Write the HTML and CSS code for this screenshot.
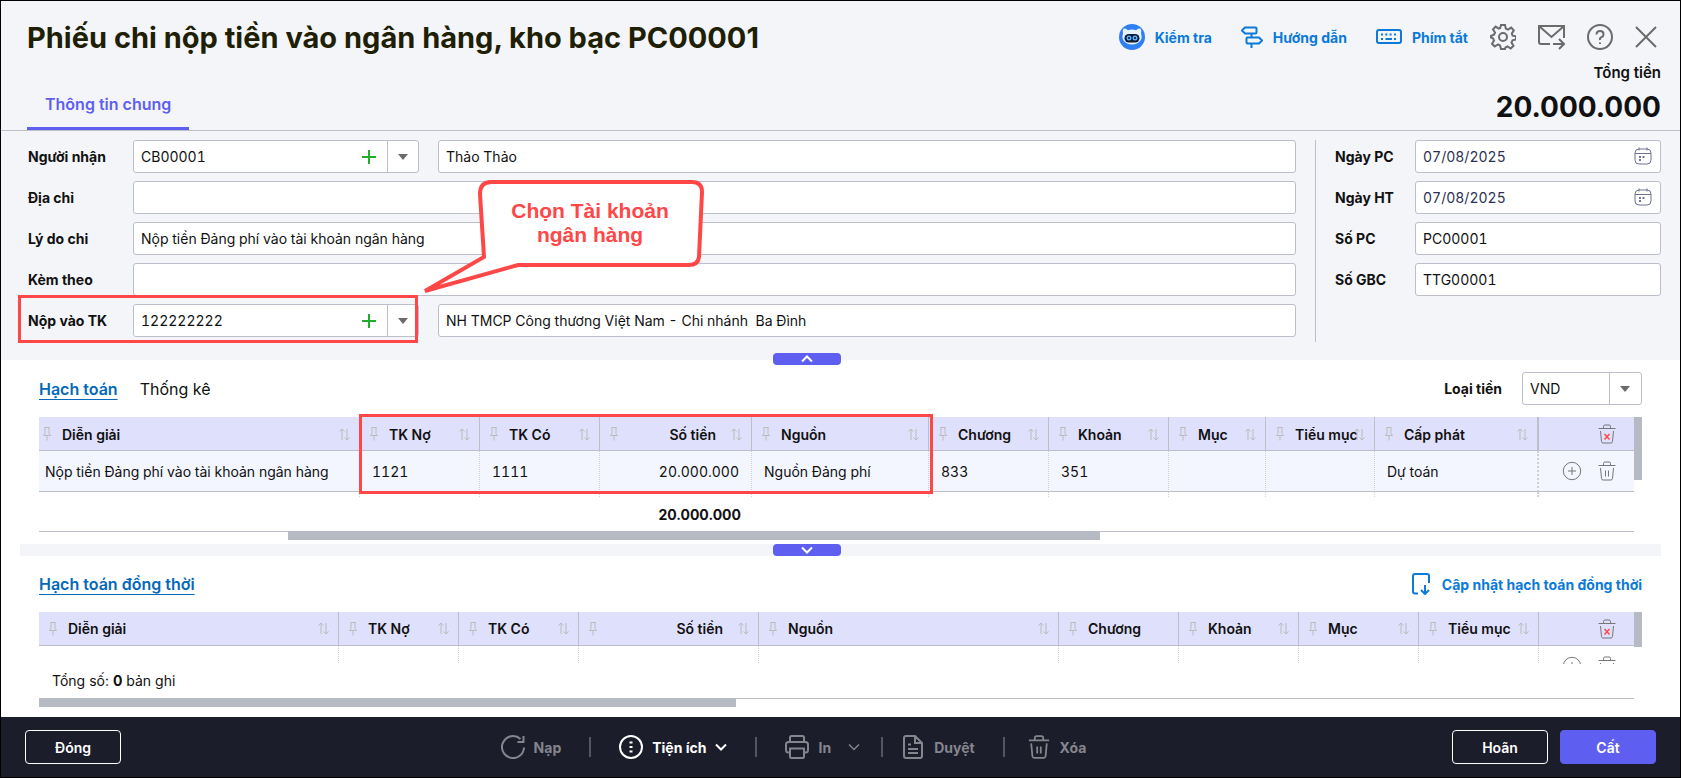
FILE: index.html
```html
<!DOCTYPE html>
<html lang="vi">

<head>
  <meta charset="UTF-8">
  <meta name="viewport" content="width=device-width, initial-scale=1.0">
  <title>Phiếu chi nộp tiền vào ngân hàng, kho bạc PC00001</title>
  <link rel="stylesheet" href="styles.css">
</head>

<body>
  <!-- icons used more than once -->
  <svg class="sprite" aria-hidden="true">
    <symbol id="i-pin" viewBox="0 0 8 14"><path d="M1.5 .5h5M2 .5v6L.5 8.500h7L6 6.500v-6M4 8.500v5" /></symbol>
    <symbol id="i-sort" viewBox="0 0 11 13"><path d="M3 12V1M.5 3.500 3 1l2.500 2.500M8 1v11M5.500 9.500 8 12l2.500-2.500" /></symbol>
    <symbol id="i-trash" viewBox="0 0 18 20"><path d="M.5 4.500h17M5.500 4.500V2.500Q5.500 1 7 1h4q1.500 0 1.500 1.500v2M2.500 7l1 10.500Q3.700 19 5 19h8q1.300 0 1.500-1.500l1-10.500M7.500 9.500v6M10.500 9.500v6" /></symbol>
    <symbol id="i-trash-x" viewBox="0 0 18 20"><path d="M.5 4.500h17M5.500 4.500V2.500Q5.500 1 7 1h4q1.500 0 1.500 1.500v2M2.500 7l1 10.500Q3.700 19 5 19h8q1.300 0 1.500-1.500l1-10.500" /><path class="cross" d="M6.500 10l5 5.500M11.500 10l-5 5.500" /></symbol>
    <symbol id="i-plus-circle" viewBox="0 0 20 20"><circle cx="10" cy="10" r="8.700" /><path d="M10 6v8M6 10h8" /></symbol>
    <symbol id="i-calendar" viewBox="0 0 18 18"><rect x="1" y="2" width="16" height="15" rx="4" /><path d="M1 6.500h16M5 .5v3M13 .5v3" /><path class="thick" d="M5 10h2M8.500 10h2M5 13h2" /></symbol>
    <symbol id="i-down" viewBox="0 0 12 8"><path d="M1 1.500l5 5 5-5" /></symbol>
  </svg>

  <div class="window">
    <header class="header">
      <div class="header-left">
        <h1>Phiếu chi nộp tiền vào ngân hàng, kho bạc PC00001</h1>
        <a class="main-tab" href="#">Thông tin chung</a>
      </div>
      <div class="header-right">
        <div class="tools">
          <a class="tool-link" href="#">
            <svg width="26" height="26" viewBox="0 0 26 26">
              <circle cx="13" cy="13" r="13" fill="#2e80f2" stroke="none" />
              <path d="M4 9.500Q3 4.500 5.500 4.500q2 0 3.500 1.700 4-1.600 8 0 1.500-1.700 3.500-1.700 2.500 0 1.500 5 1.500 4-.5 7-3 4-8.500 4t-8.500-4q-2-3-.5-7z" fill="#e6f2fd" stroke="none" />
              <rect x="5.500" y="10" width="15" height="8.500" rx="4.200" fill="#0d1c36" stroke="none" />
              <circle cx="10" cy="14" r="1.800" stroke="#5cb4ff" stroke-width="1.400" />
              <circle cx="16" cy="14" r="1.800" stroke="#5cb4ff" stroke-width="1.400" />
            </svg>
            Kiểm tra</a>
          <a class="tool-link" href="#">
            <svg class="line-blue" width="22" height="22" viewBox="0 0 22 22">
              <path d="M4 1.500h10.500q1 0 1 1v4q0 1-1 1H4L1 4.500zM18 11.500H6.500q-1 0-1 1v4q0 1 1 1H18l3-3zM10.500 7.500v4M10.500 17.500V22" />
            </svg>
            Hướng dẫn</a>
          <a class="tool-link" href="#">
            <svg class="line-blue" width="26" height="16" viewBox="0 0 26 16">
              <rect x="1" y="1" width="24" height="13" rx="2" />
              <path class="keys" d="M5 5.500h2M9.300 5.500h2M13.600 5.500h2M18 5.500h2M5 10h2M9.500 10h6.500M18 10h2" />
            </svg>
            Phím tắt</a>
          <button class="icon-btn" type="button" aria-label="Thiết lập">
            <svg width="26" height="26" viewBox="0 0 26 26">
              <path d="M11 1h4l.8 3.600 2.200 1 3.200-2 2.600 2.800-2 3.200.8 2 3.400.8v3l-3.500 1-1 2.200 2 3.200-2.800 2.700-3.200-2-2 .9L15 25h-4l-1-3.600-2-.9-3.300 2-2.700-2.700 2-3.200-.9-2.200L1 13.500v-1.500l3.200-1.500.8-1.900-2-3.300L5.600 2.600l3.200 2 1.400-.6z" />
              <circle cx="13" cy="13" r="4" />
            </svg>
          </button>
          <button class="icon-btn" type="button" aria-label="Gửi thư">
            <svg width="27" height="26" viewBox="0 0 27 26">
              <path d="M12 20H3q-2 0-2-2V2h25v12M1.500 2.500l12 10.500 12-10.500M15 20h10.500M21 15l5 5-5 5" />
            </svg>
          </button>
          <button class="icon-btn" type="button" aria-label="Trợ giúp">
            <svg width="26" height="26" viewBox="0 0 26 26">
              <circle cx="13" cy="13" r="12" />
              <path d="M9.500 10.500Q9.500 7 13 7t3.500 3.200q0 2-2 3T13 16M13 18.500v1.500" />
            </svg>
          </button>
          <button class="icon-btn" type="button" aria-label="Đóng cửa sổ">
            <svg width="22" height="22" viewBox="0 0 22 22"><path d="M1 1l20 20M21 1L1 21" /></svg>
          </button>
        </div>
        <div class="total-label">Tổng tiền</div>
        <div class="total-value">20.000.000</div>
      </div>
    </header>

    <section class="general">
      <div class="fields">
        <label for="receiver">Người nhận</label>
        <div class="pair">
          <div class="combo">
            <input type="text" id="receiver" value="CB00001">
            <button class="add" type="button" aria-label="Thêm"></button>
            <button class="drop" type="button" aria-label="Chọn"></button>
          </div>
          <input type="text" aria-label="Tên người nhận" value="Thảo Thảo">
        </div>

        <label for="address">Địa chỉ</label>
        <input type="text" id="address">

        <label for="reason">Lý do chi</label>
        <input type="text" id="reason" value="Nộp tiền Đảng phí vào tài khoản ngân hàng">

        <label for="attach">Kèm theo</label>
        <input type="text" id="attach">

        <label for="account">Nộp vào TK</label>
        <div class="pair">
          <div class="combo marked">
            <input type="text" id="account" value="122222222">
            <button class="add" type="button" aria-label="Thêm"></button>
            <button class="drop" type="button" aria-label="Chọn"></button>
          </div>
          <input type="text" aria-label="Tên ngân hàng" value="NH TMCP Công thương Việt Nam - Chi nhánh  Ba Đình">
        </div>
      </div>

      <div class="side">
        <label for="date-pc">Ngày PC</label>
        <div class="date">
          <input type="text" id="date-pc" value="07/08/2025">
          <svg width="18" height="18"><use href="#i-calendar" /></svg>
        </div>
        <label for="date-ht">Ngày HT</label>
        <div class="date">
          <input type="text" id="date-ht" value="07/08/2025">
          <svg width="18" height="18"><use href="#i-calendar" /></svg>
        </div>
        <label for="no-pc">Số PC</label>
        <input type="text" id="no-pc" value="PC00001">
        <label for="no-gbc">Số GBC</label>
        <input type="text" id="no-gbc" value="TTG00001">
      </div>

      <div class="callout">
        <svg width="284" height="116" viewBox="0 0 284 116">
          <path d="M69 2H270Q280 2 280 12L277 77Q276 85 267 85H96L3 111 62 77 58 14Q58 2 69 2z" />
        </svg>
        <p>Chọn Tài khoản<br>ngân hàng</p>
      </div>

      <button class="collapse collapse-up" type="button" aria-label="Thu gọn">
        <svg width="12" height="8"><use href="#i-down" /></svg>
      </button>
    </section>

    <section class="detail">
      <div class="detail-head detail-head-main">
        <nav class="tabs">
          <a class="active" href="#">Hạch toán</a>
          <a href="#">Thống kê</a>
        </nav>
        <label for="currency">Loại tiền</label>
        <div class="currency">
          <select id="currency">
            <option>VND</option>
          </select>
        </div>
      </div>

      <div class="grid">
        <div class="grid-view view-main">
          <table class="scrolled">
            <colgroup>
              <col>
              <col class="w120">
              <col class="w120">
              <col class="w152">
              <col class="w177">
              <col class="w120">
              <col class="w120">
              <col class="w97">
              <col class="w109">
              <col class="w164">
              <col class="w95">
            </colgroup>
            <thead>
              <tr>
                <th><div><svg class="pin"><use href="#i-pin" /></svg><span>Diễn giải</span><svg class="sort"><use href="#i-sort" /></svg></div></th>
                <th><div><svg class="pin"><use href="#i-pin" /></svg><span>TK Nợ</span><svg class="sort"><use href="#i-sort" /></svg></div></th>
                <th><div><svg class="pin"><use href="#i-pin" /></svg><span>TK Có</span><svg class="sort"><use href="#i-sort" /></svg></div></th>
                <th class="num"><div><svg class="pin"><use href="#i-pin" /></svg><span>Số tiền</span><svg class="sort"><use href="#i-sort" /></svg></div></th>
                <th><div><svg class="pin"><use href="#i-pin" /></svg><span>Nguồn</span><svg class="sort"><use href="#i-sort" /></svg></div></th>
                <th><div><svg class="pin"><use href="#i-pin" /></svg><span>Chương</span><svg class="sort"><use href="#i-sort" /></svg></div></th>
                <th><div><svg class="pin"><use href="#i-pin" /></svg><span>Khoản</span><svg class="sort"><use href="#i-sort" /></svg></div></th>
                <th><div><svg class="pin"><use href="#i-pin" /></svg><span>Mục</span><svg class="sort"><use href="#i-sort" /></svg></div></th>
                <th><div><svg class="pin"><use href="#i-pin" /></svg><span>Tiểu mục</span><svg class="sort"><use href="#i-sort" /></svg></div></th>
                <th><div><svg class="pin"><use href="#i-pin" /></svg><span>Cấp phát</span><svg class="sort"><use href="#i-sort" /></svg></div></th>
                <th class="actions"><button type="button" aria-label="Xóa tất cả"><svg width="18" height="20"><use href="#i-trash-x" /></svg></button></th>
              </tr>
            </thead>
            <tbody>
              <tr class="selected">
                <td>Nộp tiền Đảng phí vào tài khoản ngân hàng</td>
                <td>1121</td>
                <td>1111</td>
                <td class="num">20.000.000</td>
                <td>Nguồn Đảng phí</td>
                <td>833</td>
                <td>351</td>
                <td></td>
                <td></td>
                <td>Dự toán</td>
                <td class="actions">
                  <button type="button" aria-label="Thêm dòng"><svg width="20" height="20"><use href="#i-plus-circle" /></svg></button>
                  <button type="button" aria-label="Xóa dòng"><svg width="18" height="20"><use href="#i-trash" /></svg></button>
                </td>
              </tr>
              <tr>
                <td></td>
                <td></td>
                <td></td>
                <td></td>
                <td></td>
                <td></td>
                <td></td>
                <td></td>
                <td></td>
                <td></td>
                <td></td>
              </tr>
            </tbody>
          </table>
        </div>
        <div class="vscroll"></div>
        <div class="mark"></div>
      </div>
      <div class="summary"><b>20.000.000</b></div>
      <div class="hscroll"><div class="thumb thumb-main"></div></div>
    </section>

    <div class="splitter">
      <button class="collapse" type="button" aria-label="Mở rộng">
        <svg width="12" height="8"><use href="#i-down" /></svg>
      </button>
    </div>

    <section class="detail">
      <div class="detail-head">
        <nav class="tabs">
          <a class="active" href="#">Hạch toán đồng thời</a>
        </nav>
        <a class="update-link" href="#">
          <svg class="line-blue" width="18" height="22" viewBox="0 0 18 22">
            <path d="M6 20.500H3q-2 0-2-2V3q0-2 2-2h12q2 0 2 2v7M13 12v8.500M9 17l4 4 4-4" />
          </svg>
          Cập nhật hạch toán đồng thời</a>
      </div>

      <div class="grid">
        <div class="grid-view view-sub">
          <table>
            <colgroup>
              <col>
              <col class="w120">
              <col class="w120">
              <col class="w180">
              <col class="w300">
              <col class="w120">
              <col class="w120">
              <col class="w120">
              <col class="w120">
              <col class="w95">
            </colgroup>
            <thead>
              <tr>
                <th><div><svg class="pin"><use href="#i-pin" /></svg><span>Diễn giải</span><svg class="sort"><use href="#i-sort" /></svg></div></th>
                <th><div><svg class="pin"><use href="#i-pin" /></svg><span>TK Nợ</span><svg class="sort"><use href="#i-sort" /></svg></div></th>
                <th><div><svg class="pin"><use href="#i-pin" /></svg><span>TK Có</span><svg class="sort"><use href="#i-sort" /></svg></div></th>
                <th class="num"><div><svg class="pin"><use href="#i-pin" /></svg><span>Số tiền</span><svg class="sort"><use href="#i-sort" /></svg></div></th>
                <th><div><svg class="pin"><use href="#i-pin" /></svg><span>Nguồn</span><svg class="sort"><use href="#i-sort" /></svg></div></th>
                <th><div><svg class="pin"><use href="#i-pin" /></svg><span>Chương</span></div></th>
                <th><div><svg class="pin"><use href="#i-pin" /></svg><span>Khoản</span><svg class="sort"><use href="#i-sort" /></svg></div></th>
                <th><div><svg class="pin"><use href="#i-pin" /></svg><span>Mục</span><svg class="sort"><use href="#i-sort" /></svg></div></th>
                <th><div><svg class="pin"><use href="#i-pin" /></svg><span>Tiểu mục</span><svg class="sort"><use href="#i-sort" /></svg></div></th>
                <th class="actions"><button type="button" aria-label="Xóa tất cả"><svg width="18" height="20"><use href="#i-trash-x" /></svg></button></th>
              </tr>
            </thead>
            <tbody>
              <tr>
                <td></td>
                <td></td>
                <td></td>
                <td></td>
                <td></td>
                <td></td>
                <td></td>
                <td></td>
                <td></td>
                <td class="actions">
                  <button type="button" aria-label="Thêm dòng"><svg width="20" height="20"><use href="#i-plus-circle" /></svg></button>
                  <button type="button" aria-label="Xóa dòng"><svg width="18" height="20"><use href="#i-trash" /></svg></button>
                </td>
              </tr>
            </tbody>
          </table>
        </div>
        <div class="vscroll vscroll-short"></div>
      </div>
      <div class="record-count">Tổng số: <b>0</b> bản ghi</div>
      <div class="hscroll"><div class="thumb thumb-sub"></div></div>
    </section>

    <footer class="footer">
      <button class="btn" type="button">Đóng</button>
      <div class="commands">
        <button class="cmd" type="button">
          <svg width="24" height="24" viewBox="0 0 24 24"><path d="M23 12.500A11 11 0 1 1 19.500 4M22.500 1v6h-6" /></svg>
          Nạp</button>
        <span class="sep"></span>
        <button class="cmd on" type="button">
          <svg width="24" height="24" viewBox="0 0 24 24"><circle cx="12" cy="12" r="11" /><path class="dots" d="M12 6.500v2M12 11v2M12 15.500v2" /></svg>
          Tiện ích
          <svg width="12" height="8"><use href="#i-down" /></svg></button>
        <span class="sep"></span>
        <button class="cmd" type="button">
          <svg width="24" height="24" viewBox="0 0 24 24"><path d="M5 7V2.500Q5 1 6.500 1h11Q19 1 19 2.500V7M5 17.500H3.500Q1 17.500 1 15V9.500Q1 7 3.500 7h17Q23 7 23 9.500V15q0 2.500-2.500 2.500H19M5 13.500h14v8q0 1.500-1.500 1.500h-11Q5 23 5 21.500z" /></svg>
          In
          <svg class="spaced" width="12" height="8"><use href="#i-down" /></svg></button>
        <span class="sep tight"></span>
        <button class="cmd" type="button">
          <svg width="24" height="24" viewBox="0 0 24 24"><path d="M14 1H5Q3 1 3 3v18q0 2 2 2h14q2 0 2-2V8zM14 1v7h7M7 9.500h3M7 14h10M7 18h10" /></svg>
          Duyệt</button>
        <span class="sep wide"></span>
        <button class="cmd" type="button">
          <svg width="24" height="24" viewBox="0 0 18 20"><use href="#i-trash" /></svg>
          Xóa</button>
      </div>
      <div class="footer-right">
        <button class="btn" type="button">Hoãn</button>
        <button class="btn primary" type="button">Cất</button>
      </div>
    </footer>
  </div>
</body>

</html>
```
FILE: styles.css
```css
* {
  box-sizing: border-box;
}

body {
  margin: 0;
  font-family: Inter, "Liberation Sans", sans-serif;
  font-size: 14px;
  color: #111;
  background-color: #fff;
}

input,
select,
button {
  font: inherit;
  color: inherit;
}

button {
  padding: 0;
  border: none;
  background: none;
  cursor: pointer;
}

a {
  color: inherit;
  text-decoration: none;
}

svg {
  display: block;
  flex: none;
  fill: none;
  stroke: currentColor;
}

.sprite {
  position: absolute;
  width: 0;
  height: 0;
}

.window {
  display: flex;
  flex-direction: column;
  min-height: 100vh;
  border: 1px solid #000;
}

/* header */
.header {
  display: flex;
  justify-content: space-between;
  padding: 0 19px 0 26px;
  background-color: #f3f5f9;
  border-bottom: 1px solid #bcbeca;
}

.header-left {
  display: flex;
  flex-direction: column;
  justify-content: space-between;
  align-items: flex-start;
}

h1 {
  margin: 17px 0 0;
  font-size: 29px;
  line-height: 40px;
  color: #1f1f06;
}

.main-tab {
  padding: 0 18px;
  font-size: 16px;
  font-weight: 600;
  line-height: 46px;
  color: #5e5ff0;
  border-bottom: 3px solid #5e5ff0;
}

.header-right {
  text-align: right;
}

.tools {
  display: flex;
  align-items: center;
  justify-content: flex-end;
  gap: 22px;
  height: 36px;
  margin: 18px 4px 0 0;
}

.tool-link {
  display: flex;
  align-items: center;
  gap: 10px;
  margin-right: 7px;
  font-weight: 700;
  color: #0b7ad8;
}

.tool-link:nth-child(3) {
  margin-right: 0;
}

.line-blue {
  stroke: #0b7ad8;
  stroke-width: 2;
}

.icon-btn {
  color: #6b6b6b;
}

.icon-btn svg {
  stroke-width: 2;
}

.total-label {
  font-size: 15px;
  font-weight: 600;
  line-height: 36px;
}

.total-value {
  font-size: 28px;
  font-weight: 700;
  line-height: 32px;
  padding-bottom: 7px;
}

/* general info */
.general {
  position: relative;
  display: flex;
  padding: 9px 19px 18px 27px;
  background-color: #f3f5f9;
}

.general label,
.detail-head label {
  font-weight: 700;
}

.fields {
  flex: 1;
  display: grid;
  grid-template-columns: 97px 1fr;
  gap: 8px;
  align-content: start;
  align-items: center;
  margin-right: 19px;
}

.side {
  display: grid;
  grid-template-columns: 72px 246px;
  gap: 8px;
  align-content: start;
  align-items: center;
  height: 202px;
  padding-left: 19px;
  border-left: 1px solid #bcbeca;
}

input[type="text"] {
  width: 100%;
  height: 33px;
  padding: 0 7px;
  font-variant-numeric: tabular-nums;
  background-color: #fff;
  border: 1px solid #bcbeca;
  border-radius: 3px;
}

.pair {
  display: grid;
  grid-template-columns: 286px 1fr;
  gap: 19px;
}

.combo {
  position: relative;
  display: flex;
  background-color: #fff;
  border: 1px solid #bcbeca;
  border-radius: 3px;
}

.combo input[type="text"] {
  flex: 1;
  min-width: 0;
  height: 31px;
  border: none;
}

.add {
  width: 36px;
  background: linear-gradient(#1fad2b, #1fad2b) center / 14px 2px no-repeat, linear-gradient(#1fad2b, #1fad2b) center / 2px 14px no-repeat;
}

.drop {
  display: flex;
  align-items: center;
  justify-content: center;
  width: 31px;
  border-left: 1px solid #bcbeca;
}

.drop::before,
.currency::after {
  content: "";
  border: 5px solid transparent;
  border-top: 6px solid #6b6b6b;
  border-bottom: none;
}

.marked::after {
  content: "";
  position: absolute;
  inset: -10px 0 -7px -116px;
  border: 3px solid #ff4747;
  pointer-events: none;
}

.date {
  position: relative;
  color: #2b3152;
}

.date svg {
  position: absolute;
  right: 9px;
  top: 7px;
  color: #6f7293;
}

.thick {
  stroke-width: 2;
}

.callout {
  position: absolute;
  left: 421px;
  top: 49px;
  color: #ff4747;
}

.callout path {
  fill: #fff;
  stroke-width: 4;
}

.callout p {
  position: absolute;
  left: 56px;
  top: 19px;
  width: 224px;
  margin: 0;
  font-family: "Liberation Sans", sans-serif;
  font-size: 21px;
  font-weight: 700;
  line-height: 24px;
  text-align: center;
}

.collapse {
  position: absolute;
  left: 46%;
  display: flex;
  align-items: center;
  justify-content: center;
  width: 68px;
  height: 12px;
  color: #fff;
  background-color: #5e5ff0;
  border-radius: 4px;
}

.collapse svg {
  stroke-width: 2;
}

.collapse-up {
  bottom: -5px;
}

.collapse-up svg {
  transform: rotate(180deg);
}

/* detail grids */
.detail {
  padding: 0 38px;
}

.detail-head {
  display: flex;
  align-items: center;
  height: 56px;
}

.detail-head-main {
  height: 57px;
}

.tabs {
  display: flex;
  flex: 1;
  gap: 22px;
  font-size: 16px;
  line-height: 18px;
}

.tabs .active {
  font-weight: 600;
  color: #0568b8;
  text-decoration: underline;
  text-underline-offset: 4px;
}

.currency {
  position: relative;
  width: 120px;
  margin-left: 20px;
}

.currency select {
  display: block;
  width: 100%;
  height: 33px;
  padding: 0 7px;
  appearance: none;
  background: linear-gradient(#bcbeca, #bcbeca) right 31px center / 1px 100% no-repeat #fff;
  border: 1px solid #bcbeca;
  border-radius: 3px;
}

.currency::after {
  position: absolute;
  right: 12px;
  top: 14px;
  pointer-events: none;
}

.update-link {
  display: flex;
  align-items: center;
  gap: 12px;
  font-weight: 700;
  color: #0b7ad8;
}

.grid {
  position: relative;
  display: flex;
  align-items: flex-start;
}

.grid-view {
  flex: 1;
  overflow: hidden;
}

.view-main {
  height: 81px;
}

.view-sub {
  height: 52px;
}

table {
  width: 100%;
  table-layout: fixed;
  border-spacing: 0;
}

.w95 { width: 95px; }
.w97 { width: 97px; }
.w109 { width: 109px; }
.w120 { width: 120px; }
.w152 { width: 152px; }
.w164 { width: 164px; }
.w177 { width: 177px; }
.w180 { width: 180px; }
.w300 { width: 300px; }

th {
  height: 34px;
  padding: 0 9px 0 10px;
  text-align: left;
  font-weight: 600;
  background-color: #dfe0fc;
  border-right: 1px solid #bcbeca;
  border-bottom: 1px solid #bcbeca;
}

th > div {
  display: flex;
  align-items: center;
  gap: 11px;
}

th span {
  flex: 1;
  min-width: 0;
  white-space: nowrap;
}

th.num span {
  padding-right: 4px;
  text-align: right;
}

.pin {
  width: 8px;
  height: 14px;
  color: #bbb;
}

.sort {
  width: 11px;
  height: 13px;
  color: #bbb;
}

td {
  height: 41px;
  padding: 0 12px;
  font-variant-numeric: tabular-nums;
  white-space: nowrap;
  border-right: 1px dotted #cfd0d6;
  border-bottom: 1px solid #bcbeca;
}

.selected td {
  background-color: #f3f6ff;
}

td.num {
  text-align: right;
}

.scrolled th {
  padding-top: 1px;
}

.scrolled th:first-child {
  padding-left: 4px;
}

.scrolled td:first-child {
  padding-left: 6px;
}

.scrolled th:nth-last-child(2),
.scrolled td:nth-last-child(2) {
  border-right-width: 2px;
}

th.actions,
td.actions,
td:last-child {
  padding: 0 18px 0 0;
  text-align: right;
  color: #777;
  border-right: none;
}

.actions button {
  margin-left: 12px;
  vertical-align: middle;
}

.cross {
  stroke: #ff4747;
  stroke-width: 1.5;
}

.vscroll {
  width: 8px;
  height: 63px;
  background-color: #b6bac2;
}

.vscroll-short {
  height: 35px;
}

/* frame round TK Nợ ... Nguồn */
.mark {
  position: absolute;
  left: 320px;
  top: -3px;
  width: 574px;
  height: 80px;
  border: 3px solid #ff4747;
}

.summary {
  width: 702px;
  line-height: 33px;
  text-align: right;
}

.record-count {
  padding-left: 13px;
  line-height: 34px;
}

.hscroll {
  height: 9px;
  margin-right: 8px;
  border-top: 1px solid #bcbeca;
}

.thumb {
  height: 9px;
  margin-top: -1px;
  background-color: #b6bac2;
}

.thumb-main {
  width: 812px;
  margin-left: 249px;
}

.thumb-sub {
  width: 697px;
}

.splitter {
  position: relative;
  height: 12px;
  margin-top: 4px;
  background: linear-gradient(#f3f5f9, #f3f5f9) 19px 0 / calc(100% - 38px) 100% no-repeat;
}

/* footer */
.footer {
  display: flex;
  align-items: center;
  justify-content: space-between;
  height: 60px;
  margin-top: auto;
  padding: 0 24px;
  color: #fff;
  background-color: #1c1d2b;
}

.btn {
  width: 96px;
  height: 34px;
  font-weight: 600;
  border: 1px solid #fff;
  border-radius: 4px;
}

.btn.primary {
  background-color: #5e5ff0;
  border-color: #5e5ff0;
}

.footer-right {
  display: flex;
  gap: 12px;
}

.commands {
  display: flex;
  align-items: center;
  padding-left: 14px;
}

.cmd {
  display: flex;
  align-items: center;
  gap: 9px;
  font-weight: 700;
  color: #85858d;
}

.cmd.on {
  color: #fff;
}

.cmd svg {
  stroke-width: 2;
}

.cmd use {
  stroke-width: 1.5;
}

.cmd.on use {
  stroke-width: 2;
}

.cmd .spaced {
  margin-left: 8px;
}

.dots {
  stroke-width: 3;
}

.sep {
  width: 2px;
  height: 20px;
  margin: 0 28px;
  background-color: #55565f;
}

.sep.tight {
  margin: 0 18px 0 21px;
}

.sep.wide {
  margin: 0 22px 0 28px;
}
```
